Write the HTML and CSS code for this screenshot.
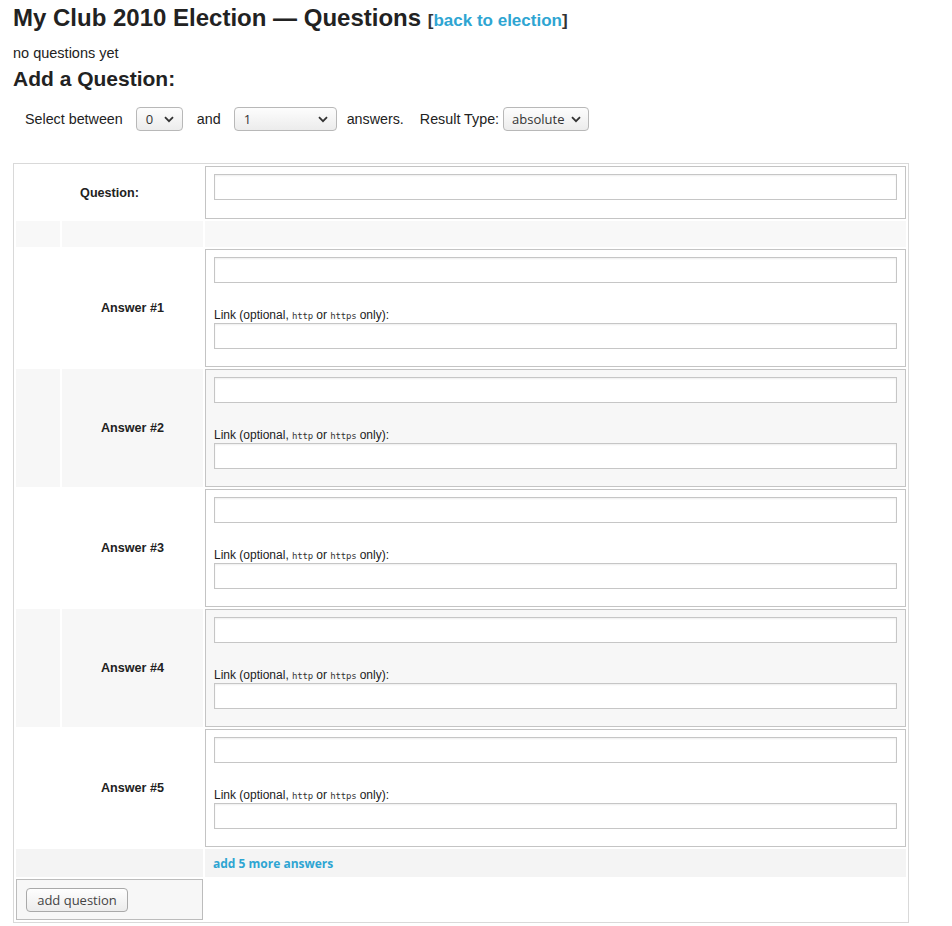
FILE: index.html
```html
<!DOCTYPE html>
<html>
<head>
<meta charset="utf-8">
<title>My Club 2010 Election — Questions</title>
<link rel="stylesheet" href="styles.css">
</head>
<body>
<h1 class="title">My Club 2010 Election — Questions <span class="back">[<a href="#">back to election</a>]</span></h1>
<p class="empty">no questions yet</p>
<h2 class="subtitle">Add a Question:</h2>
<div class="opts">
  <span class="opt-text t1">Select between</span>
  <span class="sel sel-min"><span>0</span><svg width="10" height="7" viewBox="0 0 10 7"><path d="M1 1.2 L5 5.2 L9 1.2" fill="none" stroke="#333" stroke-width="1.8"/></svg></span>
  <span class="opt-text t2">and</span>
  <span class="sel sel-max"><span>1</span><svg width="10" height="7" viewBox="0 0 10 7"><path d="M1 1.2 L5 5.2 L9 1.2" fill="none" stroke="#333" stroke-width="1.8"/></svg></span>
  <span class="opt-text t3">answers.</span>
  <span class="opt-text t4">Result Type:</span>
  <span class="sel sel-type"><span>absolute</span><svg width="10" height="7" viewBox="0 0 10 7"><path d="M1 1.2 L5 5.2 L9 1.2" fill="none" stroke="#333" stroke-width="1.8"/></svg></span>
</div>

<table class="qtable">
  <colgroup><col class="c1"><col class="c2"><col class="c3"></colgroup>
  <tr class="qrow">
    <td colspan="2" class="label">Question:</td>
    <td class="field qfield"><input class="txt" type="text"></td>
  </tr>
  <tr class="spacer"><td></td><td></td><td></td></tr>
  <tr class="arow">
    <td></td><td class="label">Answer #1</td>
    <td class="field"><input class="txt" type="text"><div class="linklbl">Link (optional, <code>http</code> or <code>https</code> only):</div><input class="txt" type="text"></td>
  </tr>
  <tr class="arow alt">
    <td></td><td class="label">Answer #2</td>
    <td class="field"><input class="txt" type="text"><div class="linklbl">Link (optional, <code>http</code> or <code>https</code> only):</div><input class="txt" type="text"></td>
  </tr>
  <tr class="arow">
    <td></td><td class="label">Answer #3</td>
    <td class="field"><input class="txt" type="text"><div class="linklbl">Link (optional, <code>http</code> or <code>https</code> only):</div><input class="txt" type="text"></td>
  </tr>
  <tr class="arow alt">
    <td></td><td class="label">Answer #4</td>
    <td class="field"><input class="txt" type="text"><div class="linklbl">Link (optional, <code>http</code> or <code>https</code> only):</div><input class="txt" type="text"></td>
  </tr>
  <tr class="arow">
    <td></td><td class="label">Answer #5</td>
    <td class="field"><input class="txt" type="text"><div class="linklbl">Link (optional, <code>http</code> or <code>https</code> only):</div><input class="txt" type="text"></td>
  </tr>
  <tr class="morerow">
    <td colspan="2"></td>
    <td><a href="#" class="more">add 5 more answers</a></td>
  </tr>
  <tr class="btnrow">
    <td colspan="2" class="btncell"><button class="btn" type="button">add question</button></td>
    <td></td>
  </tr>
</table>
</body>
</html>
```

FILE: styles.css
```css
html, body {
  margin: 0;
  padding: 0;
  background: #fff;
}
body {
  padding: 0 13px;
  font-family: "Liberation Sans", Arial, sans-serif;
  color: #222;
}
a {
  color: #2ea5d2;
  text-decoration: none;
}
.title {
  margin: 4px 0 0;
  font-size: 24px;
  line-height: 28px;
  font-weight: bold;
  white-space: nowrap;
}
.back {
  font-size: 17px;
  font-weight: bold;
  color: #333;
}
.empty {
  margin: 10px 0 0;
  font-size: 14.5px;
  line-height: 16px;
}
.subtitle {
  margin: 6px 0 0;
  font-size: 21px;
  line-height: 24px;
  font-weight: bold;
}
.opts {
  margin-top: 16px;
  display: flex;
  align-items: center;
  height: 24px;
  font-size: 14.3px;
  color: #222;
}
.opt-text { white-space: nowrap; }
.t1 { margin-left: 12px; margin-right: 13px; }
.t2 { margin-left: 14px; margin-right: 13px; }
.t3 { margin-left: 10px; }
.t4 { margin-left: 16px; margin-right: 4px; }
.sel {
  box-sizing: border-box;
  height: 24px;
  display: flex;
  align-items: center;
  justify-content: space-between;
  border: 1px solid #b8b8b8;
  border-radius: 4px;
  background: linear-gradient(#fdfdfd, #ececec);
  font-family: "Open Sans", "DejaVu Sans", sans-serif;
  font-size: 13px;
  color: #333;
  padding: 0 8px 0 9px;
}
.sel svg { display: block; }
.sel-min { width: 47px; }
.sel-max { width: 103px; }
.sel-type { width: 86px; padding-left: 8px; padding-right: 7px; }

.qtable {
  margin-top: 32px;
  width: 896px;
  table-layout: fixed;
  border: 1px solid #d9d9d9;
  border-spacing: 2px;
  border-collapse: separate;
}
.c1 { width: 44px; }
.c2 { width: 141px; }
.c3 { width: 701px; }
.qtable td {
  padding: 0;
  vertical-align: middle;
  box-sizing: border-box;
}
.label {
  text-align: center;
  font-size: 12.6px;
  font-weight: bold;
  color: #222;
}
.field {
  border: 1px solid #c4c4c4;
  padding: 7px 8px 17px !important;
}
.qfield {
  padding-bottom: 18px !important;
}
.txt {
  display: block;
  box-sizing: border-box;
  width: 100%;
  height: 26px;
  margin: 0;
  border: 1px solid #c6c6c6;
  box-shadow: inset 0 1px 2px rgba(0,0,0,0.07);
  background: #fff;
  font-size: 13px;
  outline: none;
}
.linklbl {
  margin-top: 25px;
  margin-bottom: 1px;
  height: 14px;
  overflow: hidden;
  font-size: 12px;
  line-height: 14px;
  color: #222;
  white-space: nowrap;
}
.linklbl code {
  font-family: "DejaVu Sans Mono", "Liberation Mono", monospace;
  font-size: 9px;
  letter-spacing: -0.2px;
  line-height: 1;
  color: #333;
}
.spacer td {
  height: 26px;
  background: #f8f8f8;
}
.arow.alt td { background: #f7f7f7; }
.morerow td {
  height: 28px;
  background: #f4f4f4;
}
.more {
  display: inline-block;
  margin-left: 8px;
  font-family: "Open Sans", "DejaVu Sans", sans-serif;
  font-weight: bold;
  font-size: 12px;
}
.btncell {
  height: 41px;
  border: 1px solid #bcbcbc;
  background: #f7f7f7;
  padding: 0 0 0 9px !important;
}
.btn {
  display: block;
  box-sizing: border-box;
  width: 102px;
  height: 24px;
  border: 1px solid #a9a9a9;
  border-radius: 4px;
  background: linear-gradient(#fefefe, #ececec);
  font-family: "Open Sans", "DejaVu Sans", sans-serif;
  font-size: 13px;
  color: #444;
  padding: 0;
}
```
